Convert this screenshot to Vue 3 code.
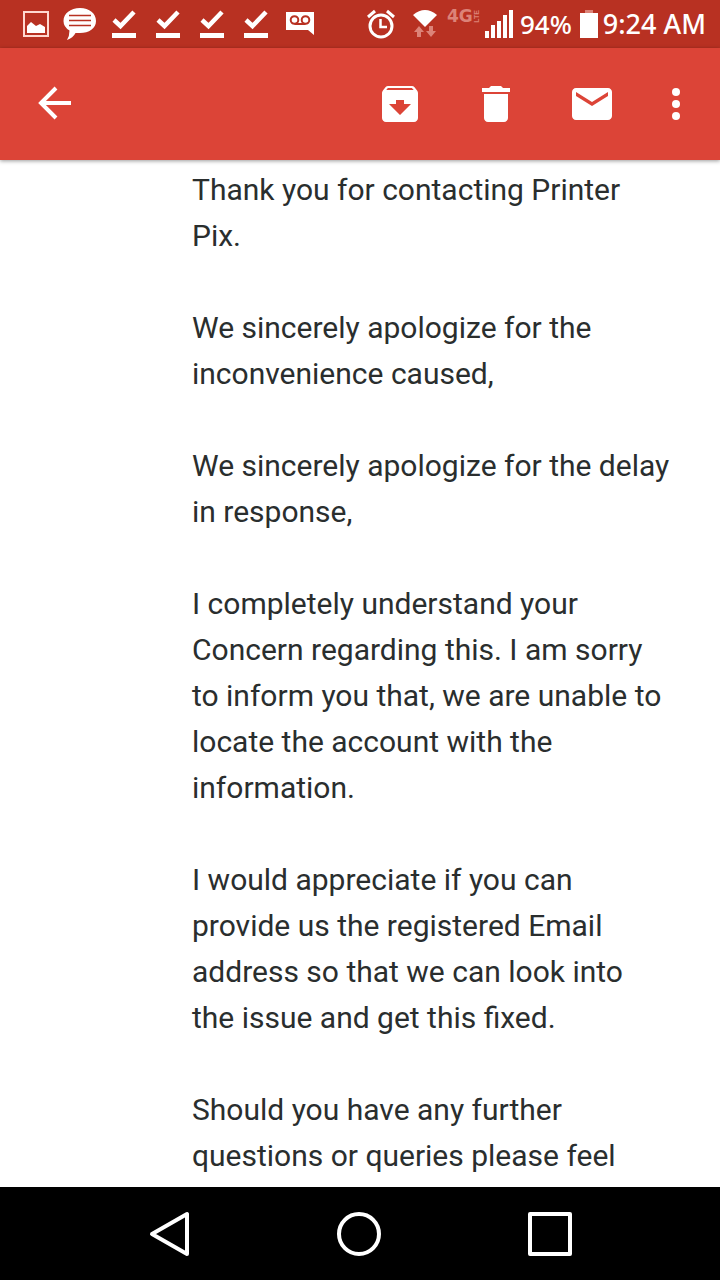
<script setup>
const paragraphs = [
  'Thank you for contacting Printer Pix.',
  'We sincerely apologize for the inconvenience caused,',
  'We sincerely apologize for the delay in response,',
  'I completely understand your Concern regarding this. I am sorry to inform you that, we are unable to locate the account with the information.',
  'I would appreciate if you can provide us the registered Email address so that we can look into the issue and get this fixed.',
  'Should you have any further questions or queries please feel'
]
</script>

<template>
  <div class="screen">
    <div class="status">
      <div class="notices">
        <svg width="26" height="26" viewBox="0 0 26 26">
          <rect x="1" y="1" width="24" height="24" fill="none" stroke="#ffd8d0" stroke-width="2" />
          <path d="M4 22V15L8 11L13 15L17 13L22 16V22Z" fill="#fff" />
        </svg>
        <svg class="bubble" width="34" height="32" viewBox="0 0 34 32">
          <path d="M17 0C26.500 0 33 5.500 33 13S26 25 17 25H12.500Q10 30 4 32Q6.500 28 6.500 22.500Q.5 19 .5 13C.5 5.500 7.500 0 17 0Z" fill="#fff" />
          <path d="M6 7.500H28M6 12.500H28M6 17.500H28" stroke="#b83122" stroke-width="1.600" />
        </svg>
        <svg v-for="n in 4" :key="n" width="24" height="28" viewBox="0 0 24 28">
          <path d="M2 10L8.500 16L22 2" fill="none" stroke="#fff" stroke-width="4.500" />
          <path d="M0 23H24V28H0Z" fill="#fff" />
        </svg>
        <svg class="voicemail" width="28" height="24" viewBox="0 0 28 24">
          <path d="M0 0H28V23L22 18H0Z" fill="#fff" />
          <g fill="none" stroke="#b83122" stroke-width="2">
            <circle cx="8.500" cy="8" r="3.800" />
            <circle cx="19.500" cy="8" r="3.800" />
            <path d="M8.500 12H19.500" />
          </g>
        </svg>
      </div>
      <div class="system">
        <svg width="28" height="30" viewBox="0 0 28 30">
          <g fill="none" stroke="#fff">
            <circle cx="14" cy="17" r="11" stroke-width="3" />
            <path d="M1 8L8 2M20 2L27 8" stroke-width="3" />
            <path d="M13.500 10V18H20" stroke-width="2.500" />
          </g>
        </svg>
        <svg class="wifi" width="24" height="28" viewBox="0 0 24 28">
          <path d="M0 5Q12 -5 24 5L12 17Z" fill="#fff" />
          <path d="M6 16L11 22H8V27H4V22H1ZM16 16H20V21H23L18 27L13 21H16Z" fill="#dc8378" />
        </svg>
        <span class="network">4G<small>LTE</small></span>
        <svg width="28" height="28" viewBox="0 0 28 28">
          <path d="M0 21H4V28H0ZM6 15H10V28H6ZM12 11H16V28H12ZM18 5H22V28H18ZM24 0H28V28H24Z" fill="#fff" />
        </svg>
        <span class="percent">94%</span>
        <svg width="18" height="28" viewBox="0 0 18 28">
          <path d="M5 0H13V3H5Z" fill="#dc8378" />
          <path d="M0 3H18V28H0Z" fill="#fff" />
        </svg>
        <time class="clock">9:24 AM</time>
      </div>
    </div>

    <header class="toolbar">
      <button class="back" aria-label="Back">
        <svg width="48" height="48" viewBox="0 0 48 48">
          <path d="M40 23H11M25 8L10 23L25 38" fill="none" stroke="#fff" stroke-width="4" />
        </svg>
      </button>
      <button class="action" aria-label="Archive">
        <svg width="48" height="48" viewBox="0 0 24 24" fill="#fff">
          <path d="M20.540 5.230l-1.390-1.680C18.880 3.210 18.470 3 18 3H6c-.47 0-.88.21-1.160.55L3.460 5.230C3.170 5.570 3 6.020 3 6.500V19c0 1.100.9 2 2 2h14c1.100 0 2-.9 2-2V6.500c0-.48-.17-.93-.46-1.270zM12 17.500L6.500 12H10v-2h4v2h3.500L12 17.500zM5.120 5l.81-1h12l.94 1H5.120z" />
        </svg>
      </button>
      <button class="action" aria-label="Delete">
        <svg width="48" height="48" viewBox="0 0 24 24" fill="#fff">
          <path d="M6 19c0 1.100.9 2 2 2h8c1.100 0 2-.9 2-2V7H6v12zM19 4h-3.500l-1-1h-5l-1 1H5v2h14V4z" />
        </svg>
      </button>
      <button class="action" aria-label="Mark as unread">
        <svg width="48" height="48" viewBox="0 0 24 24" fill="#fff">
          <path d="M20 4H4c-1.100 0-2 .9-2 2v12c0 1.100.9 2 2 2h16c1.100 0 2-.9 2-2V6c0-1.100-.9-2-2-2zm0 4l-8 5-8-5V6l8 5 8-5v2z" />
        </svg>
      </button>
      <button class="more" aria-label="More options">
        <svg width="48" height="48" viewBox="0 0 24 24" fill="#fff">
          <circle cx="12" cy="6" r="2" />
          <circle cx="12" cy="12" r="2" />
          <circle cx="12" cy="18" r="2" />
        </svg>
      </button>
    </header>

    <main class="message">
      <p v-for="text in paragraphs" :key="text">{{ text }}</p>
    </main>

    <nav class="keys">
      <button aria-label="Back">
        <svg width="48" height="48" viewBox="0 0 48 48">
          <path d="M42 4V44L7 24Z" />
        </svg>
      </button>
      <button aria-label="Home">
        <svg width="48" height="48" viewBox="0 0 48 48">
          <circle cx="24" cy="24" r="20" />
        </svg>
      </button>
      <button aria-label="Recent apps">
        <svg width="48" height="48" viewBox="0 0 48 48">
          <rect x="4" y="4" width="40" height="40" />
        </svg>
      </button>
    </nav>
  </div>
</template>

<style>
body {
  margin: 0;
}
</style>

<style scoped>
.screen {
  display: flex;
  flex-direction: column;
  height: 100vh;
  overflow: hidden;
  background: #fff;
  font-family: Roboto, sans-serif;
}

svg {
  display: block;
  flex: none;
}

button {
  display: flex;
  align-items: center;
  justify-content: center;
  padding: 0;
  border: 0;
  background: none;
}

.status {
  display: flex;
  flex: none;
  align-items: center;
  justify-content: space-between;
  height: 48px;
  padding: 0 14px 0 23px;
  background: #b83122;
  color: #fff;
}

.notices {
  display: flex;
  align-items: center;
  gap: 20px;
}

.bubble {
  margin: 0 -5px 0 -6px;
}

.voicemail {
  margin-left: -2px;
}

.system {
  display: flex;
  align-items: center;
  gap: 8px;
  font-family: "Noto Sans", sans-serif;
}

.wifi {
  margin: 0 2px 0 10px;
}

.network {
  display: flex;
  align-items: center;
  align-self: flex-start;
  width: 33px;
  margin-right: -3px;
  padding-top: 2px;
  color: #dc8378;
  font: bold 17px/16px "DejaVu Sans", sans-serif;
}

.network small {
  font: bold 7px/8px "Liberation Sans", sans-serif;
  writing-mode: vertical-rl;
  transform: rotate(180deg);
}

.percent {
  margin-left: -1px;
  font-size: 26px;
  font-weight: 500;
  line-height: 36px;
}

.clock {
  margin-left: -3px;
  font-size: 27px;
  font-weight: 500;
  line-height: 36px;
}

.toolbar {
  position: relative;
  display: flex;
  flex: none;
  align-items: center;
  height: 112px;
  background: #dc4437;
  box-shadow: 0 1px 4px rgba(0, 0, 0, 0.4);
}

.back {
  width: 110px;
  height: 96px;
  margin-right: auto;
}

.action {
  width: 96px;
  height: 96px;
}

.more {
  width: 72px;
  height: 96px;
  margin-right: 8px;
}

.message {
  flex: 1;
  min-height: 0;
  overflow: hidden;
  padding: 7px 48px 0 192px;
  color: #2a2e2e;
  font-size: 30px;
  line-height: 46px;
}

.message p {
  margin: 0 0 46px;
}

.keys {
  display: grid;
  flex: none;
  grid-template-columns: repeat(3, 1fr);
  height: 93px;
  padding: 0 75px 0 74px;
  background: #000;
}

.keys svg {
  fill: none;
  stroke: #fff;
  stroke-width: 4;
  stroke-linejoin: round;
}
</style>
